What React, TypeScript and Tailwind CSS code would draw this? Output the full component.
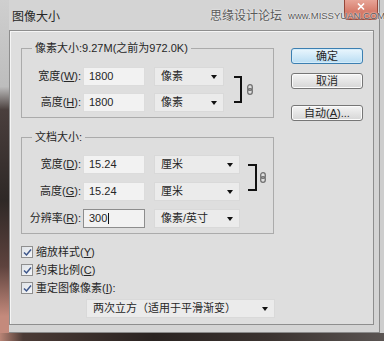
import clsx from "clsx";

const font = "font-['Liberation_Sans','Noto_Sans_CJK_SC',sans-serif]";

function Arrow() {
  return (
    <span className="w-0 h-0 border-l-[3px] border-r-[3px] border-t-[4px] border-l-transparent border-r-transparent border-t-[#111]" />
  );
}

function Select({ text, w }: { text: string; w: string }) {
  return (
    <div
      className={clsx(
        "h-[19px] flex items-center justify-between pl-[6px] pr-[6px] bg-[#ebebeb] border border-[#d9d9d9]",
        w
      )}
    >
      <span className="text-[11px] leading-none whitespace-nowrap">{text}</span>
      <Arrow />
    </div>
  );
}

function Field({
  label,
  hot,
  value,
  unit,
  unitW,
  focused,
}: {
  label: string;
  hot: string;
  value: string;
  unit: string;
  unitW: string;
  focused?: boolean;
}) {
  return (
    <div className="flex items-center h-[19px]">
      <div className="w-[61px] pr-[2px] text-right text-[11px] leading-none whitespace-nowrap">
        {label}(<u>{hot}</u>):
      </div>
      <div
        className={clsx(
          "w-[62px] h-[19px] flex items-center pl-[5px] text-[11px] leading-none bg-[#f2f2f2] border",
          focused ? "border-[#8d8d8d]" : "border-[#dcdcdc]"
        )}
      >
        {value}
        {focused && <span className="ml-[1px] w-px h-[11px] bg-[#111]" />}
      </div>
      <div className="ml-[9px]">
        <Select text={unit} w={unitW} />
      </div>
    </div>
  );
}

function Chain() {
  return (
    <svg width="6" height="11" viewBox="0 0 6 11">
      <rect x="0.7" y="0.7" width="4.6" height="5.6" rx="2.3" fill="none" stroke="#707070" strokeWidth="1.3" />
      <rect x="0.7" y="4.7" width="4.6" height="5.6" rx="2.3" fill="none" stroke="#707070" strokeWidth="1.3" />
    </svg>
  );
}

function Check({ children }: { children: React.ReactNode }) {
  return (
    <div className="h-[18px] flex items-center">
      <div className="w-[12px] h-[12px] border border-[#8f8f8f] bg-gradient-to-br from-[#dfe3e8] to-[#f5f6f8] flex items-center justify-center">
        <svg width="9" height="9" viewBox="0 0 9 9">
          <path d="M1 4.5 L3.5 7 L8 1.5" fill="none" stroke="#3d568a" strokeWidth="1.5" />
        </svg>
      </div>
      <span className="ml-[3px] text-[11px] leading-none whitespace-nowrap">{children}</span>
    </div>
  );
}

function Button({ children, primary }: { children: React.ReactNode; primary?: boolean }) {
  return (
    <div
      className={clsx(
        "h-[16px] rounded-[3px] border flex items-center justify-center text-[11px] leading-none",
        primary
          ? "border-[#3c7fb1] bg-gradient-to-b from-[#eaf6fd] to-[#b9ddf3] shadow-[inset_0_0_0_1px_#d4ecfa]"
          : "border-[#767676] bg-gradient-to-b from-[#f4f4f4] to-[#d6d6d6] shadow-[inset_0_0_0_1px_#fbfbfb]"
      )}
    >
      {children}
    </div>
  );
}

export default function App() {
  return (
    <div className={clsx("w-[384px] h-[341px] overflow-hidden flex flex-col text-[#262626]", font)}>
      <div className="flex h-[333px]">
        <div className="w-[9px] bg-[linear-gradient(to_bottom,#cfcfcf_0%,#bdbdbd_26%,#4a3f3d_33%,#2e2826_60%,#5e433e_80%,#c48a7c_95%)]" />
        <div className="w-[371px] flex flex-col bg-[#d4d4d4] border-r border-b border-[#8a8a8a]">
          <div className="relative h-[30px] flex items-start">
            <div className="pl-[3px] pt-[9px] text-[12px] leading-[16px]">图像大小</div>
            <div className="ml-auto mr-px w-[34px] h-[20px] rounded-b-[4px] bg-gradient-to-b from-[#e7a497] to-[#c9614f] border border-t-0 border-[#94473a] flex justify-center pt-[3px]">
              <svg width="8" height="7" viewBox="0 0 8 7">
                <path d="M1 0.5 L7 6.5 M7 0.5 L1 6.5" stroke="#ffffff" strokeWidth="1.6" />
              </svg>
            </div>
            <div className="absolute left-[201px] top-[8px] flex items-center gap-[6px] whitespace-nowrap text-[#5a5a5a]">
              <span className="text-[12px] leading-[16px] [text-shadow:0_0_2px_#ffffff]">思缘设计论坛</span>
              <span className="text-[9.5px] leading-[16px] text-[#555] [text-shadow:0_0_2px_#ffffff,0_0_1px_#ffffff]">
                www.MISSYUAN.COM
              </span>
            </div>
          </div>
          <div className="h-[295px] mr-[5px] bg-[#dedede] border border-[#8e8e8e] shadow-[inset_1px_1px_0_#f5f5f5] flex pt-[10px] pl-[11px]">
            <div className="w-[253px] flex flex-col">
              <fieldset className="border border-[#ababab] pt-[12px] pb-[5px]">
                <legend className="ml-[10px] px-[3px] text-[11px] leading-[14px]">像素大小:9.27M(之前为972.0K)</legend>
                <div className="flex">
                  <div className="flex flex-col gap-[7px]">
                    <Field label="宽度" hot="W" value="1800" unit="像素" unitW="w-[70px]" />
                    <Field label="高度" hot="H" value="1800" unit="像素" unitW="w-[70px]" />
                  </div>
                  <div className="ml-[10px] mt-[9px] h-[27px] flex items-center">
                    <div className="w-[8px] h-full border-y-2 border-r-2 border-[#111]" />
                    <div className="ml-[5px]">
                      <Chain />
                    </div>
                  </div>
                </div>
              </fieldset>
              <fieldset className="mt-[12px] border border-[#ababab] pt-[11px] pb-[5px]">
                <legend className="ml-[10px] px-[3px] text-[11px] leading-[14px]">文档大小:</legend>
                <div className="flex">
                  <div className="flex flex-col gap-[8px]">
                    <Field label="宽度" hot="D" value="15.24" unit="厘米" unitW="w-[86px]" />
                    <Field label="高度" hot="G" value="15.24" unit="厘米" unitW="w-[86px]" />
                    <Field label="分辨率" hot="R" value="300" unit="像素/英寸" unitW="w-[86px]" focused />
                  </div>
                  <div className="ml-[8px] mt-[9px] h-[27px] flex items-center">
                    <div className="w-[9px] h-full border-y-2 border-r-2 border-[#111]" />
                    <div className="ml-[3px]">
                      <Chain />
                    </div>
                  </div>
                </div>
              </fieldset>
              <div className="mt-[9px] flex flex-col">
                <Check>
                  缩放样式(<u>Y</u>)
                </Check>
                <Check>
                  约束比例(<u>C</u>)
                </Check>
                <Check>
                  重定图像像素(<u>I</u>):
                </Check>
              </div>
              <div className="mt-[2px] ml-[65px]">
                <Select text="两次立方（适用于平滑渐变）" w="w-[189px]" />
              </div>
            </div>
            <div className="ml-[17px] pt-[7px] w-[72px] flex flex-col">
              <Button primary>确定</Button>
              <div className="mt-[9px]">
                <Button>取消</Button>
              </div>
              <div className="mt-[16px]">
                <Button>
                  自动(<u>A</u>)...
                </Button>
              </div>
            </div>
          </div>
        </div>
        <div className="flex-1 bg-[#cdcdcd]" />
      </div>
      <div className="flex-1 bg-[linear-gradient(to_right,#b98475_0%,#4a3a35_6%,#2a2321_40%,#3b3330_70%,#5a5452_100%)]" />
    </div>
  );
}
